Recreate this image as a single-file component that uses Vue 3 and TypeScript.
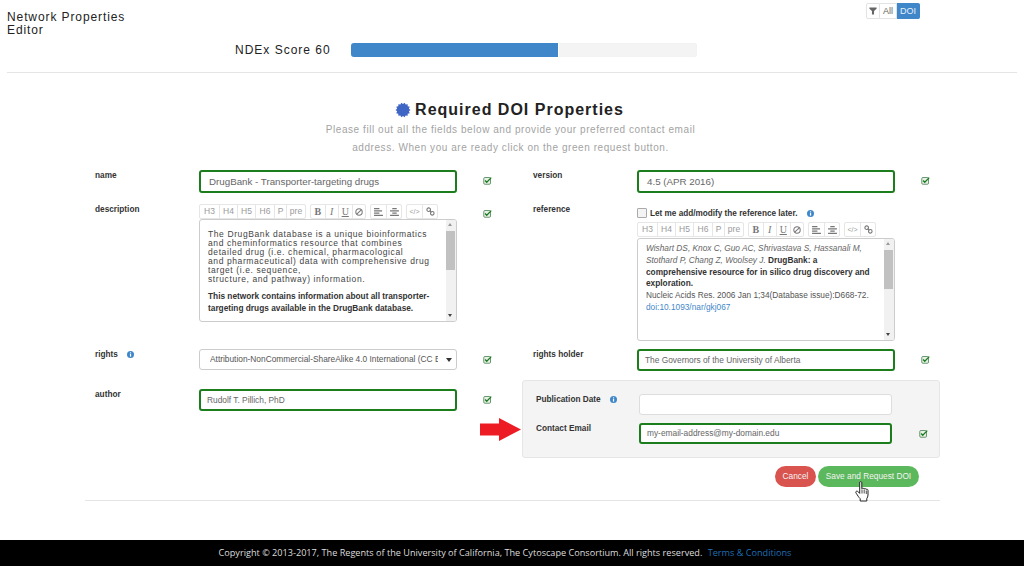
<script setup lang="ts">
const seal: string = Array.from({ length: 28 }, (_, i) => {
  const r = i % 2 ? 6 : 7.5
  const a = (i * Math.PI) / 14
  return `${(8 + r * Math.cos(a)).toFixed(2)},${(8 + r * Math.sin(a)).toFixed(2)}`
}).join(' ')
const headings: { text: string; cls: string }[] = [
  { text: 'H3', cls: 'w19' },
  { text: 'H4', cls: 'w18' },
  { text: 'H5', cls: 'w18' },
  { text: 'H6', cls: 'w19' },
  { text: 'P', cls: 'w12' },
  { text: 'pre', cls: 'w19' },
]
</script>

<template>
  <div class="page">
    <header class="top">
      <div class="title">Network Properties<br />Editor</div>
      <div class="filter">
        <span class="seg icon-seg">
          <svg width="8" height="8" viewBox="0 0 10 10"><path d="M0.5 0.500h9v1.800L6.300 5V9.500H3.700V5L0.500 2.300z" fill="#666" /></svg>
        </span>
        <span class="seg all">All</span>
        <span class="seg active">DOI</span>
      </div>
    </header>
    <div class="score">
      <span class="score-label">NDEx Score 60</span>
      <div class="bar"><div class="bar-fill" :style="{ width: '60%' }"></div></div>
    </div>
    <div class="rule"></div>

    <section class="intro">
      <h1><svg class="seal" width="16" height="16" viewBox="0 0 16 16"><polygon :points="seal" fill="#3f66c4" /></svg>Required DOI Properties</h1>
      <p>Please fill out all the fields below and provide your preferred contact email</p>
      <p>address. When you are ready click on the green request button.</p>
    </section>

    <main class="form">
      <div class="col">
        <div class="row r-name">
          <label>name</label>
          <div class="input ok big">DrugBank - Transporter-targeting drugs</div>
          <svg class="check" viewBox="0 0 12 12"><use href="#chk" /></svg>
        </div>
        <div class="row r-desc">
          <label>description</label>
          <div class="field">
            <div class="toolbar">
              <div class="tgroup"><span v-for="h in headings" :key="h.text" class="tb" :class="h.cls">{{ h.text }}</span></div>
              <div class="tgroup">
                <span class="tb w14 serif"><b>B</b></span><span class="tb w14 serif"><i>I</i></span><span class="tb w14 serif"><u>U</u></span>
                <span class="tb w14"><svg width="8" height="8" viewBox="0 0 10 10"><circle cx="5" cy="5" r="4" fill="none" stroke="#777" stroke-width="1.300" /><path d="M2.200 7.800 7.800 2.200" stroke="#777" stroke-width="1.300" /></svg></span>
              </div>
              <div class="tgroup">
                <span class="tb w16"><svg width="9" height="8" viewBox="0 0 10 9"><path d="M0 0h6v1.500H0zM0 2.500h9V4H0zM0 5h6v1.500H0zM0 7.500h10V9H0z" fill="#777" /></svg></span>
                <span class="tb w16"><svg width="9" height="8" viewBox="0 0 10 9"><path d="M2.500 0h5v1.500h-5zM0 2.500h10V4H0zM2.500 5h5v1.500h-5zM0 7.500h10V9H0z" fill="#777" /></svg></span>
              </div>
              <div class="tgroup">
                <span class="tb w16 code">&lt;/&gt;</span>
                <span class="tb w16"><svg width="9" height="9" viewBox="0 0 10 10"><circle cx="3" cy="3" r="2" fill="none" stroke="#777" stroke-width="1.200" /><circle cx="7" cy="7" r="2" fill="none" stroke="#777" stroke-width="1.200" /><path d="M4 4 6 6" stroke="#777" stroke-width="1.200" /></svg></span>
              </div>
            </div>
            <div class="editor desc">
              <div class="editor-text">
                <p class="spaced">The DrugBank database is a unique bioinformatics<br />and cheminformatics resource that combines<br />detailed drug (i.e. chemical, pharmacological<br />and pharmaceutical) data with comprehensive drug<br />target (i.e. sequence,<br />structure, and pathway) information.</p>
                <p class="strong">This network contains information about all transporter-targeting drugs available in the DrugBank database.</p>
              </div>
              <div class="scroll"><span class="up"></span><span class="thumb"></span><span class="down"></span></div>
            </div>
          </div>
          <svg class="check c-desc" viewBox="0 0 12 12"><use href="#chk" /></svg>
        </div>
        <div class="row r-rights">
          <label>rights <svg class="info" viewBox="0 0 10 10"><use href="#inf" /></svg></label>
          <div class="input select"><span class="sel-text">Attribution-NonCommercial-ShareAlike 4.0 International (CC E</span><span class="caret"></span></div>
          <svg class="check" viewBox="0 0 12 12"><use href="#chk" /></svg>
        </div>
        <div class="row r-author">
          <label>author</label>
          <div class="input ok">Rudolf T. Pillich, PhD</div>
          <svg class="check" viewBox="0 0 12 12"><use href="#chk" /></svg>
        </div>
      </div>

      <div class="col right">
        <div class="row r-name">
          <label>version</label>
          <div class="input ok big">4.5 (APR 2016)</div>
          <svg class="check" viewBox="0 0 12 12"><use href="#chk" /></svg>
        </div>
        <div class="row r-ref">
          <label>reference</label>
          <div class="field">
            <div class="later"><span class="box"></span><b>Let me add/modify the reference later.</b><svg class="info" viewBox="0 0 10 10"><use href="#inf" /></svg></div>
            <div class="toolbar">
              <div class="tgroup"><span v-for="h in headings" :key="h.text" class="tb" :class="h.cls">{{ h.text }}</span></div>
              <div class="tgroup">
                <span class="tb w14 serif"><b>B</b></span><span class="tb w14 serif"><i>I</i></span><span class="tb w14 serif"><u>U</u></span>
                <span class="tb w14"><svg width="8" height="8" viewBox="0 0 10 10"><circle cx="5" cy="5" r="4" fill="none" stroke="#777" stroke-width="1.300" /><path d="M2.200 7.800 7.800 2.200" stroke="#777" stroke-width="1.300" /></svg></span>
              </div>
              <div class="tgroup">
                <span class="tb w16"><svg width="9" height="8" viewBox="0 0 10 9"><path d="M0 0h6v1.500H0zM0 2.500h9V4H0zM0 5h6v1.500H0zM0 7.500h10V9H0z" fill="#777" /></svg></span>
                <span class="tb w16"><svg width="9" height="8" viewBox="0 0 10 9"><path d="M2.500 0h5v1.500h-5zM0 2.500h10V4H0zM2.500 5h5v1.500h-5zM0 7.500h10V9H0z" fill="#777" /></svg></span>
              </div>
              <div class="tgroup">
                <span class="tb w16 code">&lt;/&gt;</span>
                <span class="tb w16"><svg width="9" height="9" viewBox="0 0 10 10"><circle cx="3" cy="3" r="2" fill="none" stroke="#777" stroke-width="1.200" /><circle cx="7" cy="7" r="2" fill="none" stroke="#777" stroke-width="1.200" /><path d="M4 4 6 6" stroke="#777" stroke-width="1.200" /></svg></span>
              </div>
            </div>
            <div class="editor ref">
              <div class="editor-text citation">
                <i>Wishart DS, Knox C, Guo AC, Shrivastava S, Hassanali M, Stothard P, Chang Z, Woolsey J.</i> <b>DrugBank: a comprehensive resource for in silico drug discovery and exploration.</b><br />
                Nucleic Acids Res. 2006 Jan 1;34(Database issue):D668-72.<br />
                <a>doi:10.1093/nar/gkj067</a>
              </div>
              <div class="scroll"><span class="up"></span><span class="thumb"></span><span class="down"></span></div>
            </div>
          </div>
        </div>
        <div class="row r-holder">
          <label>rights holder</label>
          <div class="input ok">The Governors of the University of Alberta</div>
          <svg class="check" viewBox="0 0 12 12"><use href="#chk" /></svg>
        </div>
        <div class="panel">
          <div class="prow">
            <label>Publication Date <svg class="info" viewBox="0 0 10 10"><use href="#inf" /></svg></label>
            <div class="input plain"></div>
          </div>
          <div class="prow">
            <label>Contact Email</label>
            <div class="input ok">my-email-address@my-domain.edu</div>
            <svg class="check" viewBox="0 0 12 12"><use href="#chk" /></svg>
          </div>
          <svg class="arrow" width="41" height="23" viewBox="0 0 41 23"><path d="M0 5.500H19V0L41 11.500 19 23V17.500H0z" fill="#ed1c24" /></svg>
        </div>
        <div class="actions">
          <span class="btn red">Cancel</span>
          <span class="btn green">Save and Request DOI</span>
          <svg class="hand" width="15" height="23" viewBox="0 0 15 22">
            <path d="M4.800 1.500c.9-.9 2-.4 2 .8v6c.5-.9 1.900-.8 2.200.2.600-.8 1.900-.5 2.100.4.800-.5 1.900-.1 1.900 1.100v4.500c0 1.500-.6 2.500-1.200 3.500v2.500H5.200v-2.300C3.800 17 2.600 14.800 1.200 12.800c-.7-1-.4-1.900.3-2.100.8-.3 1.700.4 3.200 2.200V2.500z" fill="#fff" stroke="#222" stroke-width="1" stroke-linejoin="round" />
            <path d="M7 9v4M9.200 9v4M11.300 10v3.500" stroke="#222" stroke-width=".8" fill="none" />
          </svg>
        </div>
      </div>
    </main>
    <div class="rule lower"></div>

    <footer class="foot">Copyright © 2013-2017, The Regents of the University of California, The Cytoscape Consortium. All rights reserved. <a>Terms &amp; Conditions</a></footer>

    <svg width="0" height="0" class="defs">
      <symbol id="chk" viewBox="0 0 12 12">
        <rect x="1" y="2" width="9" height="9" rx="1.500" fill="#e8efe6" stroke="#3d7a45" stroke-width="1" />
        <path d="M2.800 6l2.200 2.400L11 2.200" fill="none" stroke="#157a1b" stroke-width="1.700" />
      </symbol>
      <symbol id="inf" viewBox="0 0 10 10">
        <circle cx="5" cy="5" r="5" fill="#3f87c9" />
        <rect x="4.200" y="4.200" width="1.700" height="3.800" fill="#fff" />
        <rect x="4.200" y="1.900" width="1.700" height="1.500" fill="#fff" />
      </symbol>
    </svg>
  </div>
</template>

<style>
html, body { margin: 0; background: #fff; }
</style>

<style scoped>
.page { width: 1024px; height: 567px; position: relative; overflow: hidden; font-family: "Liberation Sans", Arial, sans-serif; color: #333; background: #fff; }
.defs { position: absolute; }
.top { display: flex; justify-content: space-between; padding: 3px 104px 0 7px; height: 41px; box-sizing: border-box; }
.title { font-size: 12px; line-height: 13px; letter-spacing: .9px; margin-top: 7px; padding-top: 1px; color: #222; }
.filter { display: flex; height: 16px; font-size: 9px; letter-spacing: 0; border-radius: 2px; }
.seg { display: flex; align-items: center; justify-content: center; box-sizing: border-box; border: 1px solid #e3e3e3; border-left: 0; color: #666; }
.icon-seg { border-left: 1px solid #e3e3e3; width: 14px; border-radius: 2px 0 0 2px; }
.all { width: 17px; }
.seg.active { background: #3f87c9; border-color: #3f87c9; color: #e6f0f8; width: 23px; border-radius: 0 2px 2px 0; }
.score { display: flex; align-items: center; padding-left: 235px; height: 16px; margin-top: 1px; }
.score-label { width: 116px; font-size: 12px; letter-spacing: 1px; color: #222; }
.bar { width: 346px; height: 14px; background: #f4f4f4; border-radius: 3px; overflow: hidden; box-shadow: inset 0 0 1px #e4e4e4; }
.bar-fill { height: 100%; background: #3f87c9; border-right: 1px solid #fff; box-sizing: border-box; }
.rule { height: 1px; background: #e5e5e5; margin: 14px 7px 0; }
.rule.lower { margin: 0 84px 0 85px; width: 855px; }
.intro { text-align: center; margin-top: 26px; height: 71px; }
.intro h1 { margin: 0; padding-right: 5px; font-size: 16px; line-height: 22px; font-weight: 700; letter-spacing: 1px; color: #222; display: flex; justify-content: center; align-items: center; gap: 4px; }
.seal { flex: none; }
.intro p { margin: 0; padding-right: 3px; font-size: 10px; line-height: 18px; letter-spacing: .56px; color: #a3a3a3; }
.form { display: grid; grid-template-columns: 438px 417px; padding-left: 85px; height: 330px; }
.col { display: flex; flex-direction: column; }
.row { display: flex; align-items: flex-start; }
label { width: 114px; box-sizing: border-box; padding-left: 10px; flex: none; font-size: 8.250px; font-weight: 700; color: #333; line-height: 11px; display: flex; align-items: center; gap: 9px; }
.r-name { height: 34px; }
.r-desc { height: 145px; }
.r-rights { height: 40px; }
.r-ref { height: 145px; }
.r-holder { height: 31px; }
.check { width: 9px; height: 9px; margin: 6px 0 0 26px; flex: none; }
.c-desc { margin-top: 5px; }
.input { width: 258px; height: 22px; box-sizing: border-box; border-radius: 3px; font-size: 8.350px; line-height: 18px; padding: 0 6px; color: #666; flex: none; white-space: nowrap; background: #fff; }
.ok { border: 2px solid #1c7d1c; }
.big { font-size: 9.750px; padding-left: 8px; height: 23px; line-height: 19px; }
.plain { border: 1px solid #ddd; width: 253px; }
.select { border: 1px solid #ccc; height: 21px; line-height: 19px; display: flex; align-items: center; padding: 0 5px 0 10px; color: #555; }
.sel-text { width: 228px; overflow: hidden; flex: none; }
.caret { margin-left: 8px; border: 3px solid transparent; border-top: 4px solid #333; border-bottom: 0; }
.field { width: 258px; flex: none; }
.toolbar { display: flex; gap: 4px; height: 15px; }
.tgroup { display: flex; border: 1px solid #e6e6e6; border-radius: 2px; height: 15px; box-sizing: border-box; }
.tb { font-size: 8.500px; color: #9a9a9a; box-sizing: border-box; justify-content: center; display: flex; align-items: center; border-left: 1px solid #e6e6e6; line-height: 13px; }
.tb:first-child { border-left: 0; }
.w19 { width: 19px; }
.w18 { width: 18px; }
.w12 { width: 12px; }
.w14 { width: 13.500px; }
.w16 { width: 15px; }
.serif { font-family: "Liberation Serif", serif; font-size: 10px; color: #777; }
.code { font-size: 7px; }
.editor { margin-top: 1px; border: 1px solid #ccc; border-radius: 3px; display: flex; box-sizing: border-box; overflow: hidden; }
.desc { height: 103px; margin-top: 0; }
.ref { height: 103px; }
.editor-text { flex: 1; padding: 10px 5px 0 8px; font-size: 8.500px; overflow: hidden; color: #444; }
.editor-text p { margin: 0; }
.spaced { letter-spacing: .6px; line-height: 9px; }
.strong { font-weight: 700; margin-top: 6px !important; line-height: 12px; color: #333; font-size: 8.300px; }
.citation { padding: 4px 8px 0 8px; line-height: 11.750px; color: #555; font-size: 8.300px; }
.citation i { color: #666; }
.citation b { color: #333; }
.citation a { color: #3f87c9; }
.scroll { width: 10px; flex: none; background: #f1f1f1; position: relative; display: block; }
.thumb { position: absolute; top: 11px; left: 0; width: 9px; height: 39px; background: #c1c1c1; }
.up, .down { position: absolute; left: 2px; border: 2.500px solid transparent; }
.up { top: 3px; border-bottom: 3px solid #999; border-top: 0; }
.down { bottom: 4px; border-top: 3px solid #444; border-bottom: 0; }
.later { height: 18px; font-size: 8.200px; color: #333; display: flex; align-items: center; }
.box { width: 8px; height: 8px; border: 1px solid #aaa; border-radius: 1px; background: #f4f4f4; margin-right: 3px; }
.later .info { margin-left: 10px; }
.info { width: 7px; height: 7px; flex: none; }
.panel { position: relative; width: 418px; height: 78px; margin-left: -1px; box-sizing: border-box; background: #f4f4f4; border: 1px solid #e6e6e6; border-radius: 3px; padding: 13px 0 0 13px; }
.prow { display: flex; height: 29px; align-items: flex-start; }
.prow label { width: 103px; padding-left: 0; }
.prow .input { width: 253px; height: 21px; line-height: 17px; }
.prow .check { margin-left: 27px; margin-top: 6px; }
.arrow { position: absolute; left: -43px; top: 37px; }
.actions { display: flex; justify-content: flex-end; gap: 2px; margin-top: 8px; padding-right: 21px; position: relative; }
.btn { height: 21px; line-height: 21px; border-radius: 11px; font-size: 8.300px; color: #f3f3f3; text-align: center; }
.red { width: 41px; background: #d9534f; }
.green { width: 101px; background: #5cb85c; }
.hand { position: absolute; right: 70px; top: 14px; }
.foot { position: absolute; left: 0; right: 0; top: 540px; height: 26px; padding-right: 14px; background: #000; color: #ddd; font-family: "Open Sans", sans-serif; font-size: 9.130px; line-height: 26px; text-align: center; }
.foot a { color: #1f6fb5; margin-left: 3px; }
</style>
